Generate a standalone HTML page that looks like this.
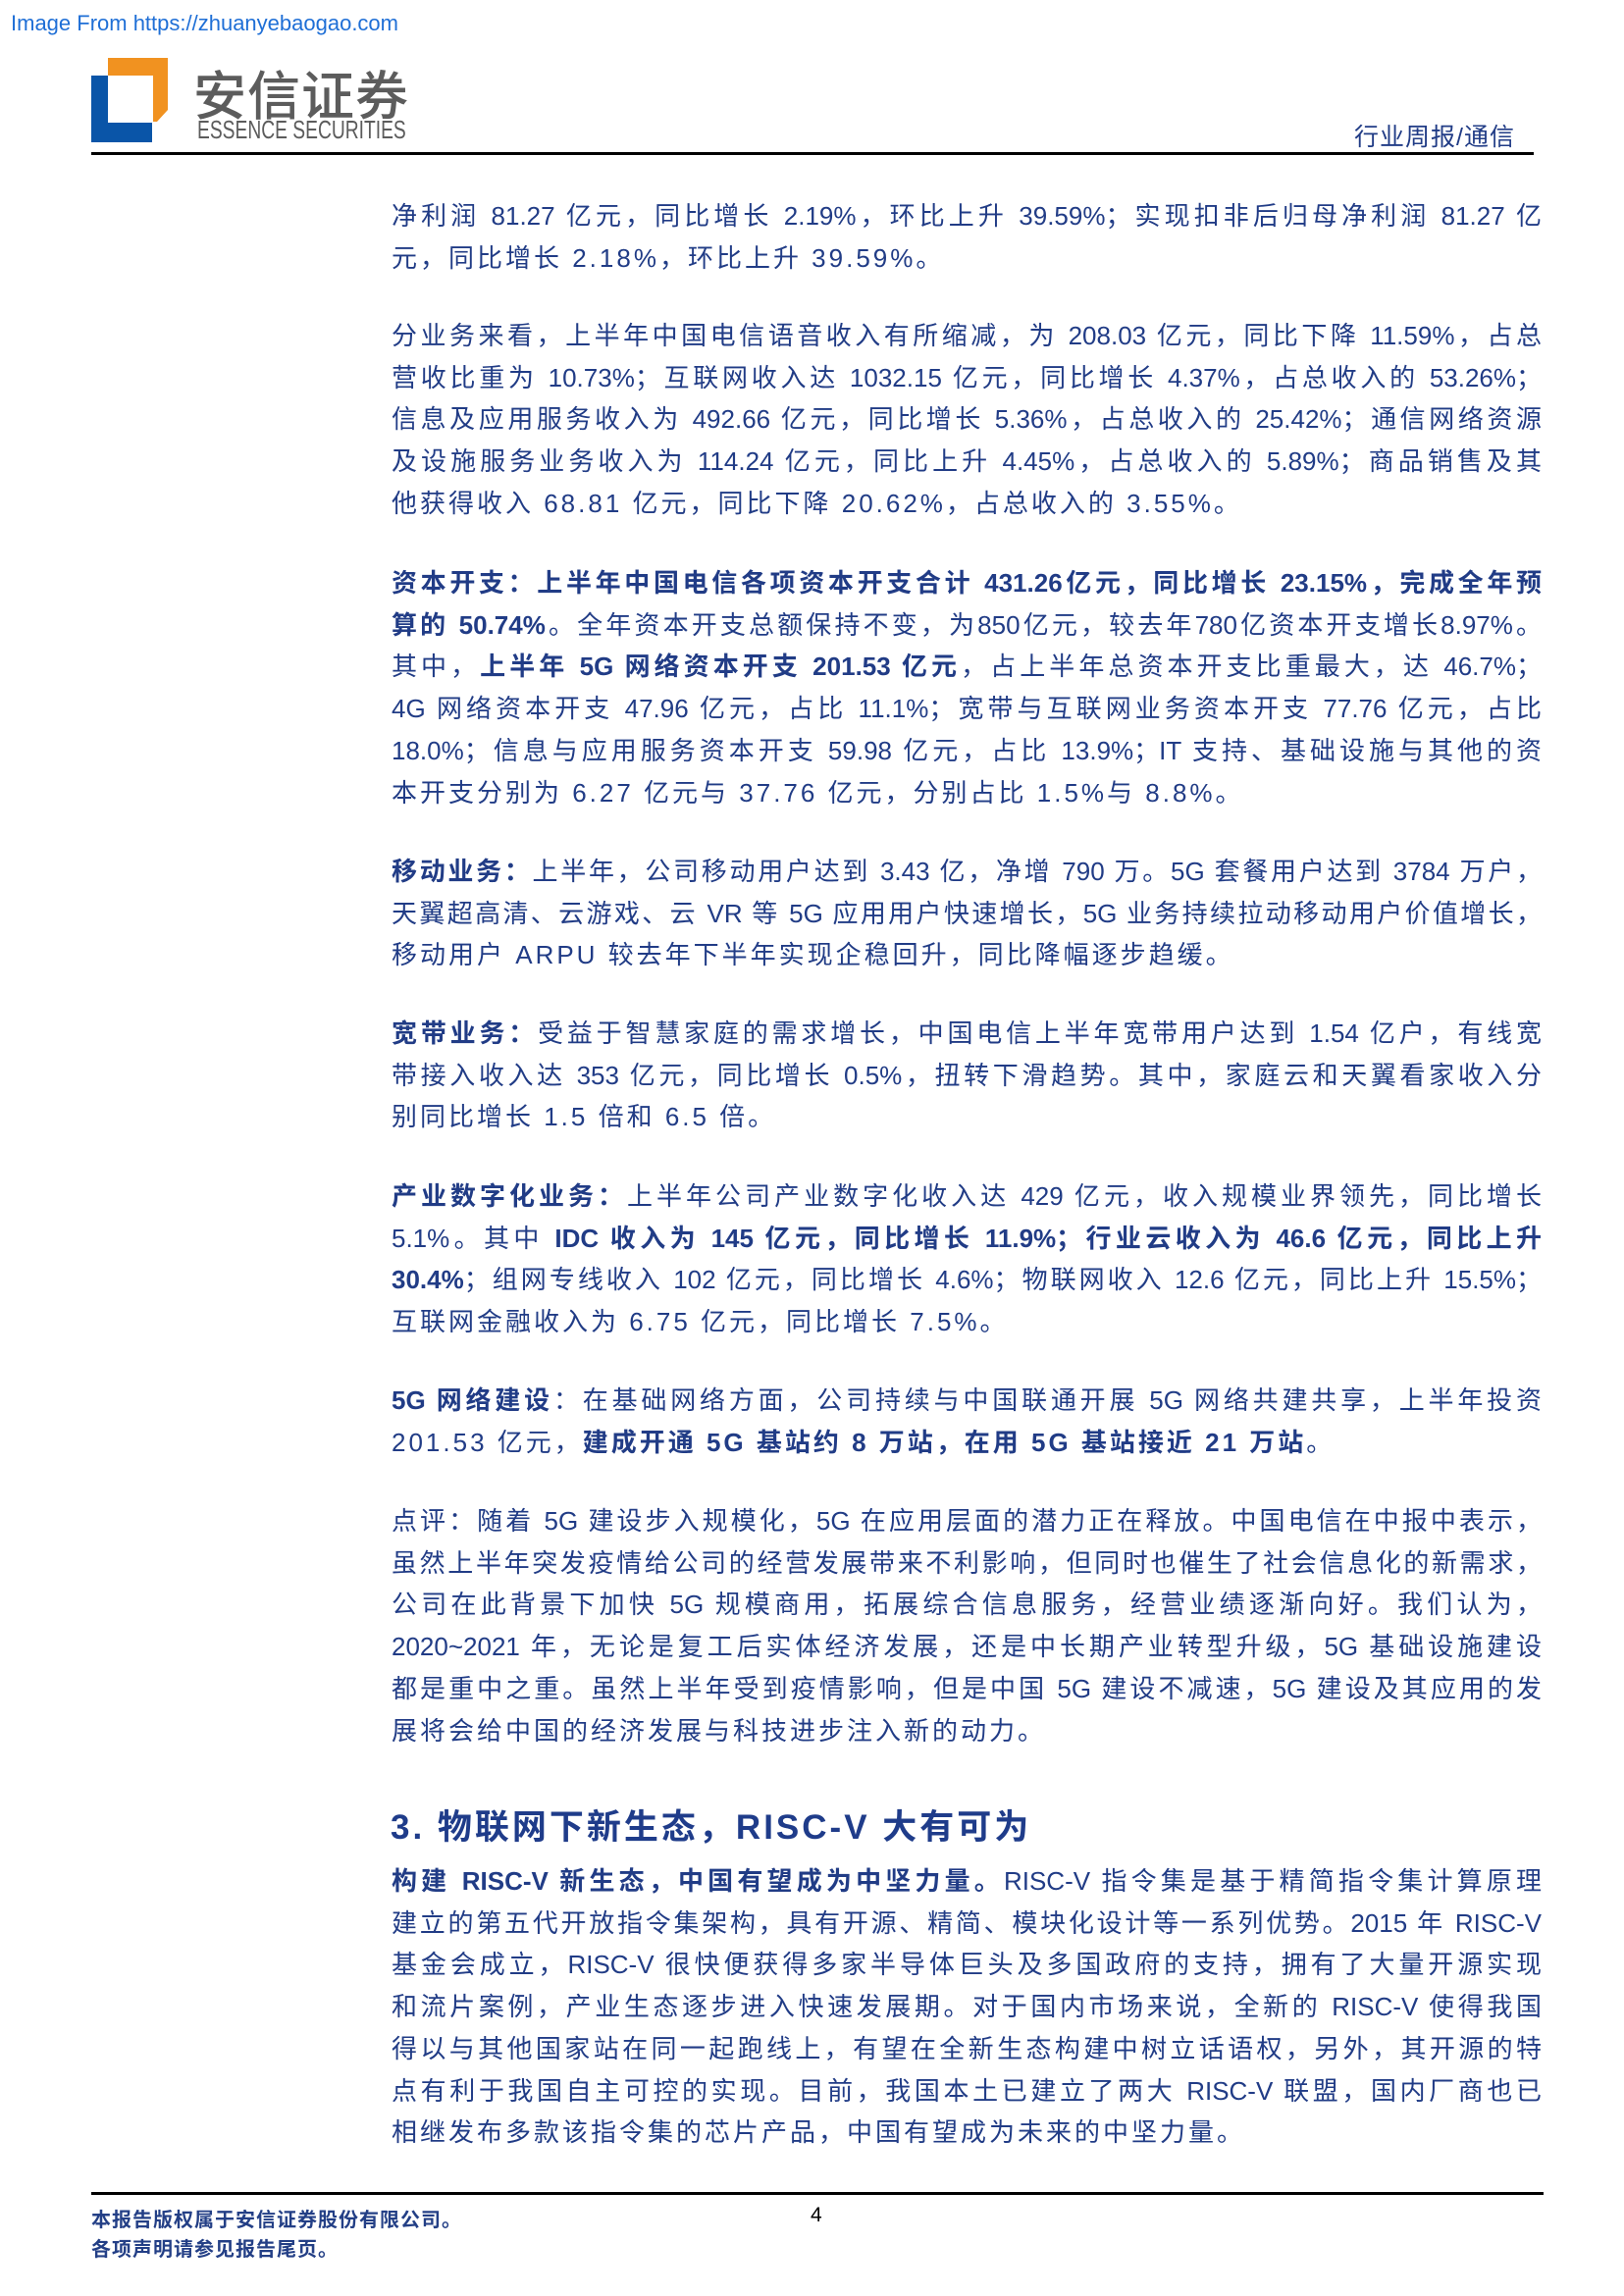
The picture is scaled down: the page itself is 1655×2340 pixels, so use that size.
<!DOCTYPE html>
<html><head><meta charset="utf-8"><style>
body{margin:0;background:#fff;}
.pg{position:relative;width:1655px;height:2340px;overflow:hidden;background:#fff;font-family:"Liberation Sans","Noto Sans CJK SC",sans-serif;color:#213c86;}
.src{position:absolute;left:11px;top:11px;font-size:22px;color:#1f6fd6;font-family:"Liberation Sans",sans-serif;}
.p{position:absolute;left:399px;width:1172px;font-size:26px;line-height:42.7px;}
.p div{white-space:nowrap;text-align:justify;text-align-last:justify;}
.p div.l{text-align-last:left;letter-spacing:3px;}
b{font-weight:bold;}
.h{position:absolute;left:398px;top:1834px;font-size:35px;font-weight:bold;letter-spacing:3px;color:#1f3c8a;white-space:nowrap;}
.ft{position:absolute;left:93px;font-size:20px;font-weight:bold;color:#233f86;letter-spacing:1px;}
</style></head><body><div class="pg">
<div class="src">Image From https://zhuanyebaogao.com</div>
<svg style="position:absolute;left:0;top:0" width="200" height="160">
<polygon points="93,77 110,77 110,125 155,125 155,145 93,145" fill="#0a55a8"/>
<polygon points="110,59 171,59 171,112 160,124 156,124 156,77 110,77" fill="#f19220"/>
</svg>
<div style="position:absolute;left:197px;top:54px;font-size:54px;font-weight:500;color:#5c5c5c;font-family:'Noto Sans CJK SC',sans-serif;letter-spacing:1px;">安信证券</div>
<div style="position:absolute;left:201px;top:117px;font-size:26px;color:#5c5c5c;font-family:'Liberation Sans',sans-serif;transform:scaleX(0.74);transform-origin:left top;white-space:nowrap;">ESSENCE SECURITIES</div>
<div style="position:absolute;left:1380px;top:120px;font-size:25px;color:#213c86;letter-spacing:1px;">行业周报/通信</div>
<div style="position:absolute;left:93px;top:155px;width:1470px;height:3px;background:#000;"></div>

<div class="p" style="top:199px">
<div>净利润 81.27 亿元，同比增长 2.19%，环比上升 39.59%；实现扣非后归母净利润 81.27 亿</div>
<div class="l">元，同比增长 2.18%，环比上升 39.59%。</div>
</div>
<div class="p" style="top:321px">
<div>分业务来看，上半年中国电信语音收入有所缩减，为 208.03 亿元，同比下降 11.59%，占总</div>
<div>营收比重为 10.73%；互联网收入达 1032.15 亿元，同比增长 4.37%，占总收入的 53.26%；</div>
<div>信息及应用服务收入为 492.66 亿元，同比增长 5.36%，占总收入的 25.42%；通信网络资源</div>
<div>及设施服务业务收入为 114.24 亿元，同比上升 4.45%，占总收入的 5.89%；商品销售及其</div>
<div class="l">他获得收入 68.81 亿元，同比下降 20.62%，占总收入的 3.55%。</div>
</div>
<div class="p" style="top:573px">
<div><b>资本开支：上半年中国电信各项资本开支合计 431.26亿元，同比增长 23.15%，完成全年预</b></div>
<div><b>算的 50.74%</b>。全年资本开支总额保持不变，为850亿元，较去年780亿资本开支增长8.97%。</div>
<div>其中，<b>上半年 5G 网络资本开支 201.53 亿元</b>，占上半年总资本开支比重最大，达 46.7%；</div>
<div>4G 网络资本开支 47.96 亿元，占比 11.1%；宽带与互联网业务资本开支 77.76 亿元，占比</div>
<div>18.0%；信息与应用服务资本开支 59.98 亿元，占比 13.9%；IT 支持、基础设施与其他的资</div>
<div class="l">本开支分别为 6.27 亿元与 37.76 亿元，分别占比 1.5%与 8.8%。</div>
</div>
<div class="p" style="top:867px">
<div><b>移动业务：</b>上半年，公司移动用户达到 3.43 亿，净增 790 万。5G 套餐用户达到 3784 万户，</div>
<div>天翼超高清、云游戏、云 VR 等 5G 应用用户快速增长，5G 业务持续拉动移动用户价值增长，</div>
<div class="l">移动用户 ARPU 较去年下半年实现企稳回升，同比降幅逐步趋缓。</div>
</div>
<div class="p" style="top:1032px">
<div><b>宽带业务：</b>受益于智慧家庭的需求增长，中国电信上半年宽带用户达到 1.54 亿户，有线宽</div>
<div>带接入收入达 353 亿元，同比增长 0.5%，扭转下滑趋势。其中，家庭云和天翼看家收入分</div>
<div class="l">别同比增长 1.5 倍和 6.5 倍。</div>
</div>
<div class="p" style="top:1198px">
<div><b>产业数字化业务：</b>上半年公司产业数字化收入达 429 亿元，收入规模业界领先，同比增长</div>
<div>5.1%。其中 <b>IDC 收入为 145 亿元，同比增长 11.9%；行业云收入为 46.6 亿元，同比上升</b></div>
<div><b>30.4%</b>；组网专线收入 102 亿元，同比增长 4.6%；物联网收入 12.6 亿元，同比上升 15.5%；</div>
<div class="l">互联网金融收入为 6.75 亿元，同比增长 7.5%。</div>
</div>
<div class="p" style="top:1406px">
<div><b>5G 网络建设</b>：在基础网络方面，公司持续与中国联通开展 5G 网络共建共享，上半年投资</div>
<div class="l">201.53 亿元，<b>建成开通 5G 基站约 8 万站，在用 5G 基站接近 21 万站</b>。</div>
</div>
<div class="p" style="top:1529px">
<div>点评：随着 5G 建设步入规模化，5G 在应用层面的潜力正在释放。中国电信在中报中表示，</div>
<div>虽然上半年突发疫情给公司的经营发展带来不利影响，但同时也催生了社会信息化的新需求，</div>
<div>公司在此背景下加快 5G 规模商用，拓展综合信息服务，经营业绩逐渐向好。我们认为，</div>
<div>2020~2021 年，无论是复工后实体经济发展，还是中长期产业转型升级，5G 基础设施建设</div>
<div>都是重中之重。虽然上半年受到疫情影响，但是中国 5G 建设不减速，5G 建设及其应用的发</div>
<div class="l">展将会给中国的经济发展与科技进步注入新的动力。</div>
</div>
<div class="h">3. 物联网下新生态，RISC-V 大有可为</div>
<div class="p" style="top:1896px">
<div><b>构建 RISC-V 新生态，中国有望成为中坚力量。</b>RISC-V 指令集是基于精简指令集计算原理</div>
<div>建立的第五代开放指令集架构，具有开源、精简、模块化设计等一系列优势。2015 年 RISC-V</div>
<div>基金会成立，RISC-V 很快便获得多家半导体巨头及多国政府的支持，拥有了大量开源实现</div>
<div>和流片案例，产业生态逐步进入快速发展期。对于国内市场来说，全新的 RISC-V 使得我国</div>
<div>得以与其他国家站在同一起跑线上，有望在全新生态构建中树立话语权，另外，其开源的特</div>
<div>点有利于我国自主可控的实现。目前，我国本土已建立了两大 RISC-V 联盟，国内厂商也已</div>
<div class="l">相继发布多款该指令集的芯片产品，中国有望成为未来的中坚力量。</div>
</div>
<div style="position:absolute;left:93px;top:2234px;width:1480px;height:3px;background:#000;"></div>
<div class="ft" style="top:2246px">本报告版权属于安信证券股份有限公司。</div>
<div class="ft" style="top:2276px">各项声明请参见报告尾页。</div>
<div style="position:absolute;left:826px;top:2246px;font-size:21px;color:#000;">4</div>
</div></body></html>
